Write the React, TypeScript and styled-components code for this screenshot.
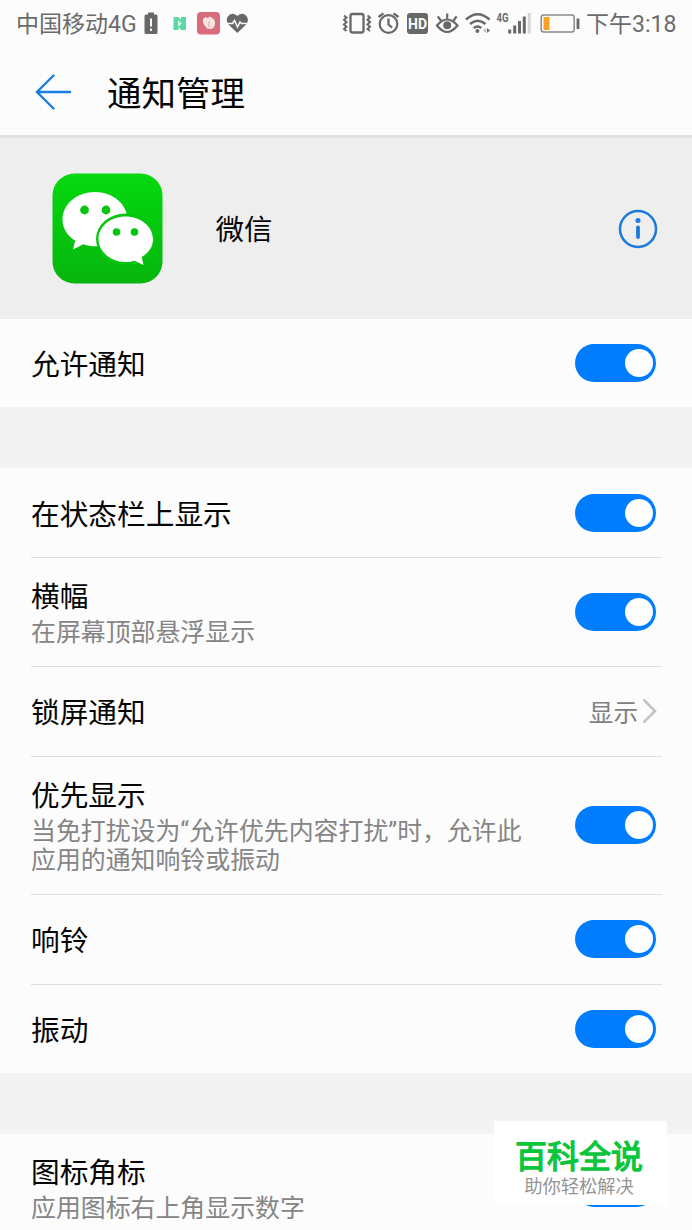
import React from 'react';
import styled, { createGlobalStyle } from 'styled-components';

const GlobalStyle = createGlobalStyle`
  * { box-sizing: border-box; }
  html, body { margin: 0; padding: 0; }
  body {
    background: #fcfcfc;
    color: #050505;
    font-family: Roboto, "Noto Sans CJK SC", sans-serif;
    overflow: hidden;
  }
`;

const Screen = styled.div`
  position: relative;
  width: 692px;
  height: 1230px;
  overflow: hidden;
  background: #fcfcfc;
`;

const StatusBar = styled.header`
  display: flex;
  justify-content: space-between;
  height: 48px;
  padding: 0 15px 0 16px;
  color: #6b6b6b;
  font-size: 23px;
  line-height: 48px;
  white-space: nowrap;
`;

const StatusGroup = styled.div`
  display: flex;
  align-items: center;
`;

const StatusText = styled.span<{ $width: number; $size?: number }>`
  width: ${(p) => p.$width}px;
  padding-top: 1px;
  font-size: ${(p) => p.$size ?? 23}px;
`;

const Glyph = styled.svg`
  display: block;
  flex: none;
`;

const TitleBar = styled.div`
  display: flex;
  align-items: center;
  height: 90px;
  padding-left: 35px;
  border-bottom: 3px solid #e1e1e1;
`;

const Title = styled.h1`
  margin: 5px 0 0 35px;
  font-size: 34.5px;
  font-weight: 400;
  line-height: 44px;
`;

const AppBanner = styled.section`
  display: flex;
  align-items: center;
  height: 181px;
  padding: 0 34px 0 52px;
  background: #eeeeee;
`;

const AppName = styled.div`
  flex: 1;
  margin: 5px 0 0 52.5px;
  font-size: 28.5px;
  line-height: 40px;
`;

const Group = styled.section`
  padding: 0 31px;
`;

const Gap = styled.div`
  height: 61px;
  background: #f3f3f3;
`;

const Row = styled.div<{ $height: number; $line?: boolean }>`
  display: flex;
  align-items: center;
  justify-content: space-between;
  height: ${(p) => p.$height}px;
  padding-right: 6px;
  box-shadow: ${(p) => (p.$line ? 'inset 0 1px 0 #dedede' : 'none')};
  margin-right: -1px;
`;

const Label = styled.div<{ $single: boolean }>`
  padding-top: ${(p) => (p.$single ? 4 : 2)}px;
`;

const Name = styled.div`
  font-size: 28.7px;
  line-height: 38px;
`;

const Hint = styled.div`
  margin-top: 2px;
  color: #858585;
  font-size: 24.9px;
  line-height: 29.5px;
  white-space: nowrap;
`;

const Track = styled.div`
  display: flex;
  flex: none;
  justify-content: flex-end;
  width: 81px;
  height: 38px;
  padding: 5px 3px;
  border-radius: 19px;
  background: #007dff;
`;

const Knob = styled.div`
  width: 28px;
  height: 28px;
  border-radius: 50%;
  background: #fff;
`;

const Value = styled.div`
  display: flex;
  align-items: center;
  gap: 4px;
  margin-right: -1px;
  color: #808080;
  font-size: 24.6px;
`;

const Stamp = styled.aside`
  position: absolute;
  left: 494px;
  top: 1121px;
  width: 173px;
  height: 84px;
  padding-top: 16px;
  background: #fff;
  text-align: center;
`;

const StampTitle = styled.div`
  color: #0bc63b;
  font-size: 32px;
  -webkit-text-stroke: 1.3px #0bc63b;
  line-height: 40px;
  padding-right: 3px;
`;

const StampText = styled.div`
  padding-right: 3px;
  color: #949494;
  font-size: 18.3px;
  line-height: 20px;
`;

const Switch = () => (
  <Track role="switch" aria-checked="true">
    <Knob />
  </Track>
);

type SettingProps = { name: string; height: number; line?: boolean; hint?: React.ReactNode; value?: string };

const Setting = ({ name, height, line, hint, value }: SettingProps) => (
  <Row $height={height} $line={line}>
    <Label $single={!hint}>
      <Name>{name}</Name>
      {hint && <Hint>{hint}</Hint>}
    </Label>
    {value ? (
      <Value>
        {value}
        <Glyph width="15" height="26" viewBox="0 0 15 26" fill="none" stroke="#c3c3c3" strokeWidth="2.5">
          <path d="M1.5 1.5 13 13 1.5 24.5" />
        </Glyph>
      </Value>
    ) : (
      <Switch />
    )}
  </Row>
);

const NoticeIcons = () => (
  <Glyph width="110" height="48" viewBox="140 0 110 48">
    <path fill="#686868" d="M148 12.500h6v2h2q1.500 0 1.500 1.500v16.500q0 1.500-1.500 1.500h-10q-1.500 0-1.500-1.500V16q0-1.500 1.500-1.500h2z" />
    <path stroke="#fcfcfc" strokeWidth="2" d="M151 18.500v8m0 2v2.500" />
    <path fill="#5bd9a5" d="M173.500 17h4.500l3 2.500V17h5v13h-4.500l-3-2.500V30h-5z" />
    <path fill="#fcfcfc" d="m178 20 4 3.500-4 3.500z" opacity=".8" />
    <rect x="197" y="12" width="23" height="22.500" rx="4" fill="#d96c7b" />
    <path fill="#f6e2df" d="M203 19l2.500-2 2 1 2.500-1.500 3 2q2.500 2 2 5.500-.5 5-5 5-3.500 0-4.500-2.500-3.200-2.500-2.500-7.500z" />
    <path stroke="#e4afb2" strokeWidth="1.200" d="M209 21v6" />
    <path fill="#686868" d="M237.300 33l-8.800-8.500q-3-4 -.8-7.800 2.300-3.400 6-2.800 2.300.3 3.600 2.200 1.400-1.900 3.700-2.200 3.800-.6 6 2.800 2.200 3.800-.8 7.800z" />
    <path fill="none" stroke="#fcfcfc" strokeWidth="1.500" d="M228 23.500h4.500l2-3 3 6.500 2.500-5 1.500 1.500h5.500" />
  </Glyph>
);

const SystemIcons = () => (
  <Glyph width="245" height="48" viewBox="341 0 245 48" fill="none" stroke="#686868">
    <rect x="350.500" y="14" width="13" height="18.500" rx="2" strokeWidth="2.300" />
    <path strokeWidth="2" d="M344 15.500l2.500 2-2.500 2.300 2.500 2.300-2.500 2.300 2.500 2.300-2.500 2.300 2.500 2M367.500 15.500l2.500 2-2.500 2.300 2.500 2.300-2.500 2.300 2.500 2.300-2.500 2.300 2.500 2" />
    <circle cx="388.500" cy="24" r="8.800" strokeWidth="2.200" />
    <path strokeWidth="2.300" d="M388.500 18.500v6l3.500 3M378.500 17l5-3.700M398.500 17l-5-3.700" />
    <rect x="407" y="13" width="21" height="21" rx="3" fill="#686868" stroke="none" />
    <text x="417.500" y="28.500" textAnchor="middle" fill="#fcfcfc" stroke="none" fontFamily="Roboto, sans-serif" fontWeight="700" fontSize="14">HD</text>
    <path strokeWidth="2.200" d="M437 25.500Q447 13.500 457.500 25.500 447 38.500 437 25.500zM447.200 18.500v-5M440.800 20.500l-3-4.200M453.600 20.500l3-4.200" />
    <circle cx="447.200" cy="25.200" r="4" fill="#686868" stroke="none" />
    <path strokeWidth="2.600" d="M466 19.500q11.700-10.500 23.500 0M470 24q7.700-6.500 15.500 0M473.700 28q4-3 7.500 0" />
    <circle cx="477.400" cy="31" r="2" fill="#686868" stroke="none" />
    <path d="M486 28l-3 2.500 3 2.500z" fill="#bdbdbd" stroke="none" />
    <path d="M487 28l3 2.500-3 2.500z" fill="#686868" stroke="none" />
    <text x="496.500" y="22" fill="#686868" stroke="none" fontFamily="Roboto, sans-serif" fontWeight="700" fontSize="12.500" textLength="12" lengthAdjust="spacingAndGlyphs">4G</text>
    <path strokeWidth="3" d="M509.700 29.500V33.500M514.700 25.500v8M519.500 21v12.500M524.300 16.500v17" />
    <path stroke="#d7d5d0" strokeWidth="3" d="M529.200 13v20.500" />
    <rect x="541.200" y="15" width="33" height="17" rx="2.500" strokeWidth="1.500" stroke="#8a8a8a" />
    <rect x="543.500" y="17" width="6" height="13" fill="#f8a125" stroke="none" />
    <path strokeWidth="2.800" d="M578 18.500v10.500" />
  </Glyph>
);

const AppLogo = () => (
  <Glyph width="111" height="111" viewBox="0 0 111 111">
    <defs>
      <linearGradient id="green" x1="0" y1="0" x2="0" y2="1">
        <stop offset="0" stopColor="#05d90f" />
        <stop offset="1" stopColor="#06b50d" />
      </linearGradient>
    </defs>
    <rect x=".5" y=".5" width="110" height="110" rx="22" fill="url(#green)" />
    <path fill="#fff" d="M43 19C24.500 19 10.500 31.500 10.500 46.500c0 9 4.800 16.200 12.700 21.300L21 76.500l10.500-5.200c4 1.400 7.500 2 11.500 2 18 0 32.500-11.800 32.500-26.800S61 19 43 19z" />
    <ellipse cx="73.500" cy="66" rx="29.500" ry="25.500" fill="#07c40e" />
    <path fill="#fff" d="M73.500 43.500C58.500 43.500 46.500 53.500 46.500 66S58.500 89 73.500 89c3.200 0 6-.4 8.900-1.300L91.500 92l-1.800-8C96.800 80 101 73.600 101 66.300c0-12.800-12.500-22.800-27.500-22.800z" />
    <g fill="#07c40e">
      <circle cx="32.500" cy="37" r="4.400" />
      <circle cx="54" cy="37" r="4.400" />
      <circle cx="64.500" cy="59" r="3.800" />
      <circle cx="82.500" cy="59" r="3.800" />
    </g>
  </Glyph>
);

export default function App() {
  return (
    <Screen>
      <GlobalStyle />
      <StatusBar>
        <StatusGroup>
          <StatusText $width={124}>中国移动4G</StatusText>
          <NoticeIcons />
        </StatusGroup>
        <StatusGroup>
          <SystemIcons />
          <StatusText $width={91}>下午3:18</StatusText>
        </StatusGroup>
      </StatusBar>
      <TitleBar>
        <Glyph width="37" height="36" viewBox="0 0 37 36" fill="none" stroke="#1a7de3" strokeWidth="2.400" strokeLinecap="round">
          <path d="M18.500 1.500 2 18l16.500 16.500M2.500 18H35" />
        </Glyph>
        <Title>通知管理</Title>
      </TitleBar>
      <AppBanner>
        <AppLogo />
        <AppName>微信</AppName>
        <Glyph width="40" height="40" viewBox="0 0 40 40" fill="none" stroke="#1a7bdc">
          <circle cx="20" cy="20" r="18" strokeWidth="2.500" />
          <circle cx="20" cy="11.500" r="2.500" fill="#1a7bdc" stroke="none" />
          <path d="M20 18.500V28" strokeWidth="3.800" strokeLinecap="round" />
        </Glyph>
      </AppBanner>
      <Group>
        <Setting name="允许通知" height={88} />
      </Group>
      <Gap />
      <Group>
        <Setting name="在状态栏上显示" height={89} />
        <Setting name="横幅" hint="在屏幕顶部悬浮显示" height={109} line />
        <Setting name="锁屏通知" value="显示" height={90} line />
        <Setting
          name="优先显示"
          hint={<>当免打扰设为“允许优先内容打扰”时，允许此<br />应用的通知响铃或振动</>}
          height={138}
          line
        />
        <Setting name="响铃" height={90} line />
        <Setting name="振动" height={89} line />
      </Group>
      <Gap />
      <Group>
        <Setting name="图标角标" hint="应用图标右上角显示数字" height={107} />
      </Group>
      <Stamp>
        <StampTitle>百科全说</StampTitle>
        <StampText>助你轻松解决</StampText>
      </Stamp>
    </Screen>
  );
}
